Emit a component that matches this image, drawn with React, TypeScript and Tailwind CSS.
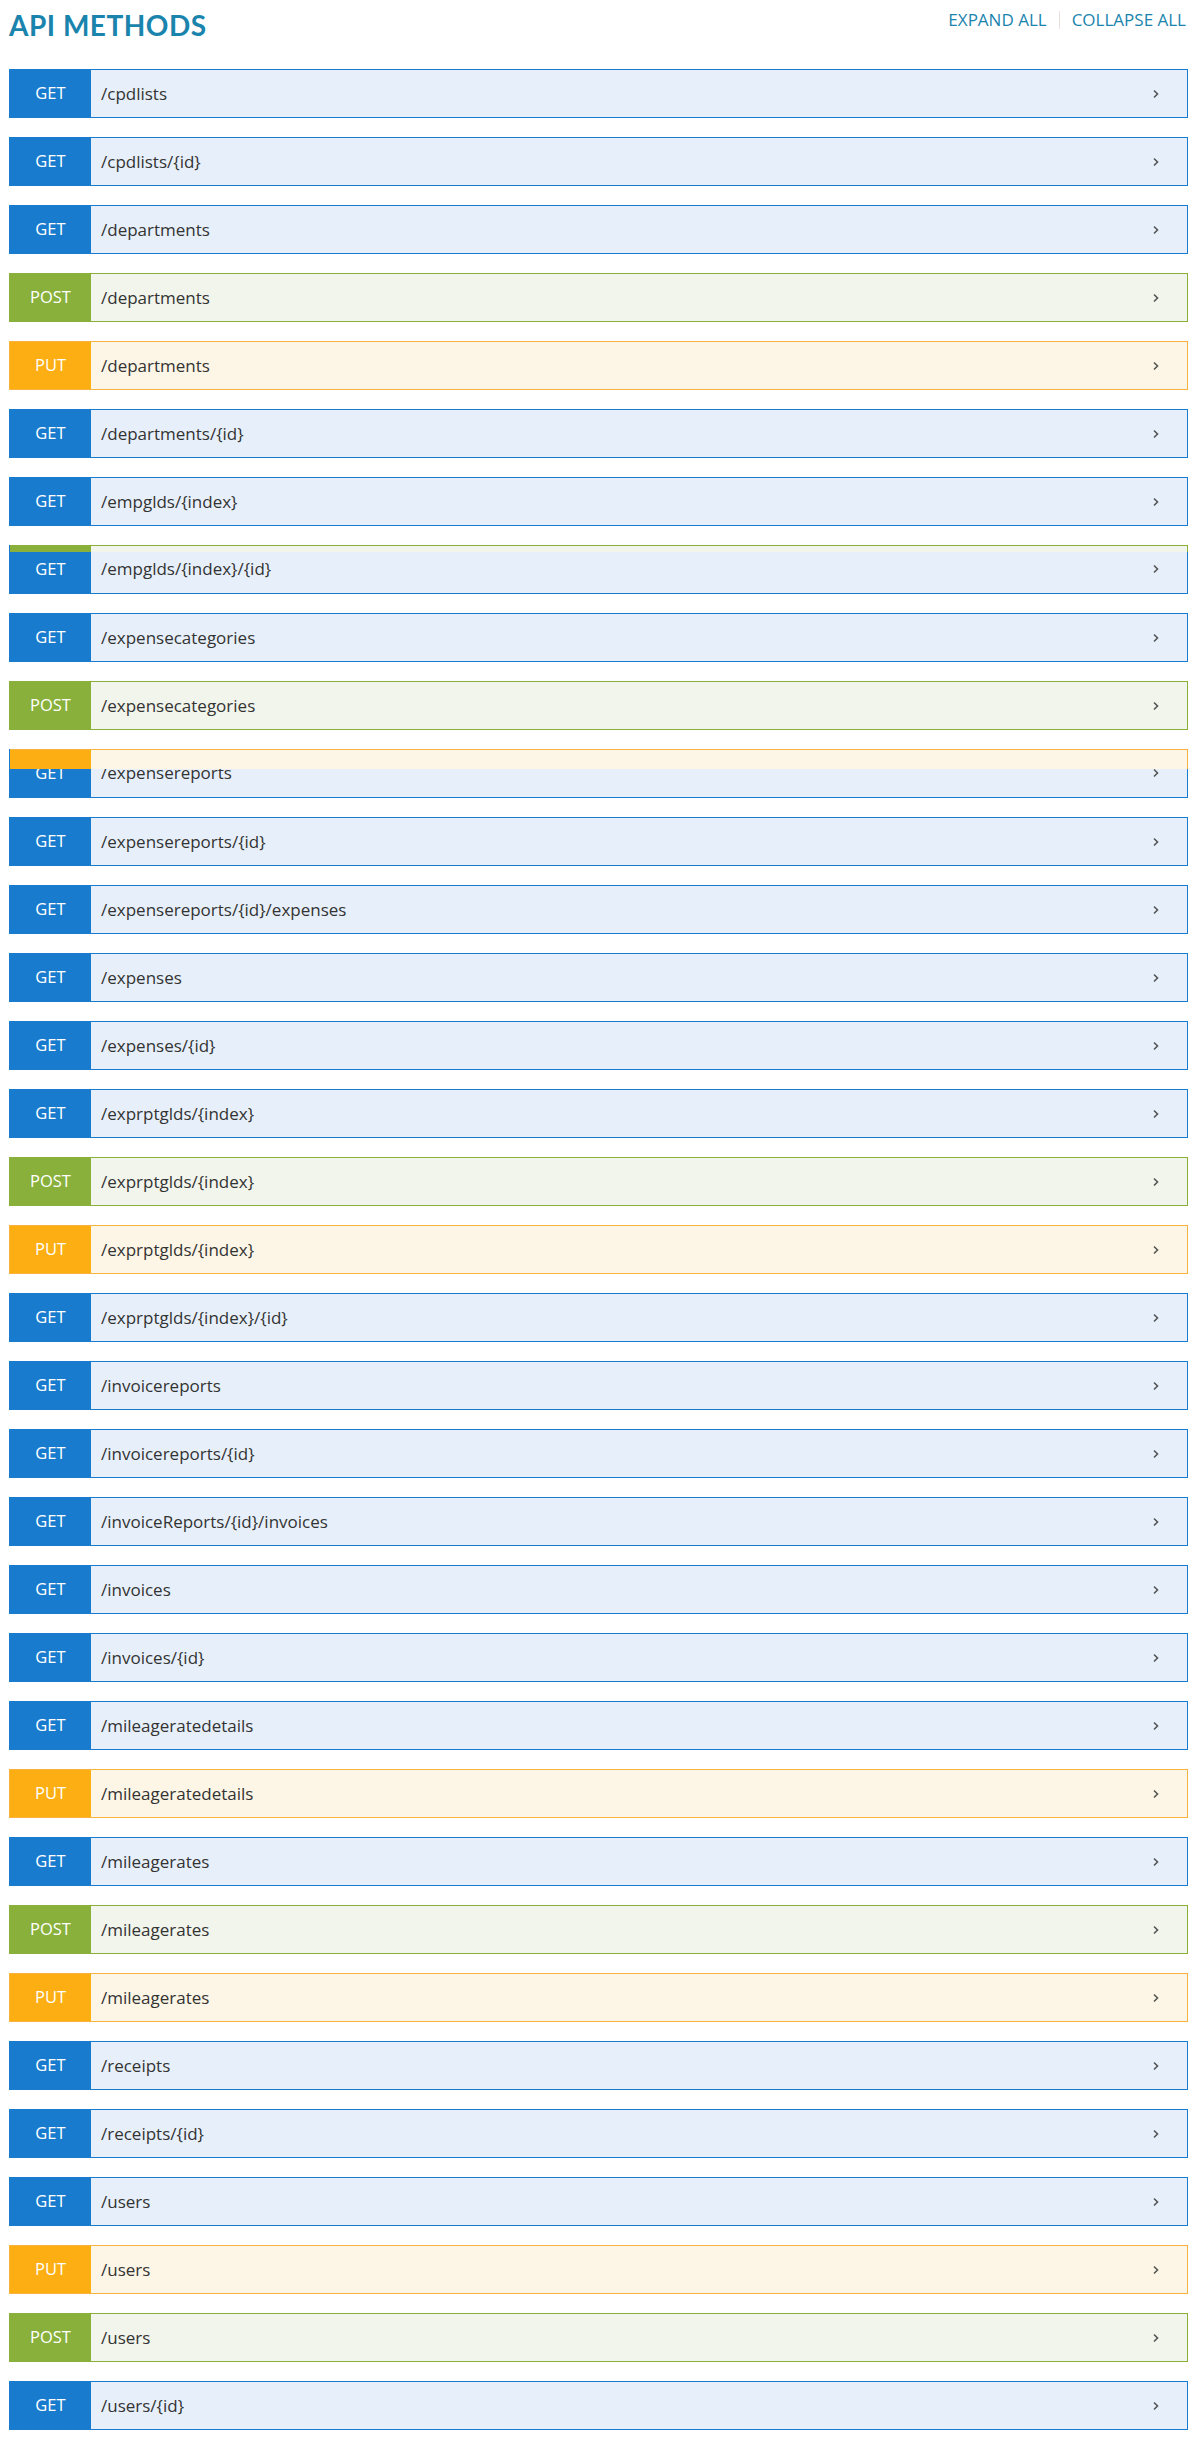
import React from 'react';

type Method = 'GET' | 'POST' | 'PUT';

const rows: [Method, string, Method?][] = [
  ['GET', '/cpdlists'],
  ['GET', '/cpdlists/{id}'],
  ['GET', '/departments'],
  ['POST', '/departments'],
  ['PUT', '/departments'],
  ['GET', '/departments/{id}'],
  ['GET', '/empglds/{index}'],
  ['GET', '/empglds/{index}/{id}', 'POST'],
  ['GET', '/expensecategories'],
  ['POST', '/expensecategories'],
  ['GET', '/expensereports`', 'PUT'],
  ['GET', '/expensereports/{id}'],
  ['GET', '/expensereports/{id}/expenses'],
  ['GET', '/expenses'],
  ['GET', '/expenses/{id}'],
  ['GET', '/exprptglds/{index}'],
  ['POST', '/exprptglds/{index}'],
  ['PUT', '/exprptglds/{index}'],
  ['GET', '/exprptglds/{index}/{id}'],
  ['GET', '/invoicereports'],
  ['GET', '/invoicereports/{id}'],
  ['GET', '/invoiceReports/{id}/invoices'],
  ['GET', '/invoices'],
  ['GET', '/invoices/{id}'],
  ['GET', '/mileageratedetails'],
  ['PUT', '/mileageratedetails'],
  ['GET', '/mileagerates'],
  ['POST', '/mileagerates'],
  ['PUT', '/mileagerates'],
  ['GET', '/receipts'],
  ['GET', '/receipts/{id}'],
  ['GET', '/users'],
  ['PUT', '/users'],
  ['POST', '/users'],
  ['GET', '/users/{id}'],
];

const styles: Record<Method, { badge: string; body: string; border: string }> = {
  GET: { badge: 'bg-[#187bcd]', body: 'bg-[#e7f0fa]', border: 'border-[#187bcd]' },
  POST: { badge: 'bg-[#88b03a]', body: 'bg-[#f1f5ec]', border: 'border-[#88b03a]' },
  PUT: { badge: 'bg-[#fcae13]', body: 'bg-[#fdf6e6]', border: 'border-[#f7b23f]' },
};

const Chevron = () => (
  <svg width="10" height="10" viewBox="0 0 10 10" className="mr-[26px] text-[#555]">
    <path d="M3 1.5 L6.5 5 L3 8.5" fill="none" stroke="currentColor" strokeWidth="1.6" />
  </svg>
);

const Row = ({ method, path, under }: { method: Method; path: string; under?: Method }) => {
  const s = styles[method];
  const u = under ? styles[under] : null;
  const strip = under === 'PUT' ? 'h-[20px]' : 'h-[7px]';
  return (
    <div className="relative h-[49px] overflow-hidden">
      <div className={`flex h-[49px] border-b border-r ${u ? 'border-t-0' : 'border-t'} ${s.border}`}>
        <div className={`w-[81px] shrink-0 flex items-center justify-center text-white text-[16.5px] ${s.badge}`}>
          {method}
        </div>
        <div className={`flex-1 flex items-center justify-between text-[#333] text-[17px] pl-[10px] ${s.body}`}>
          <span>{path}</span>
          <Chevron />
        </div>
      </div>
      {u && (
        <div className={`absolute left-0 right-0 top-0 flex ${strip} border-t border-r ${u.border}`}>
          <div className={`w-[81px] ${u.badge}`} />
          <div className={`flex-1 ${u.body}`} />
        </div>
      )}
    </div>
  );
};

export default function App() {
  return (
    <div className="w-[1193px] bg-white pl-[9px] pr-[5px] pt-[7px] pb-[31px]" style={{ fontFamily: '"Open Sans", "Noto Sans", sans-serif' }}>
      <div className="flex items-start justify-between h-[62px]">
        <h1 className="text-[28px] font-bold text-[#1a84ad] tracking-[0.5px] leading-[36px]" style={{ fontFamily: 'Lato, sans-serif' }}>API METHODS</h1>
        <div className="flex items-center text-[17px] text-[#1a84ad] pr-[2px] leading-[22px] mt-[2px]">
          <span>EXPAND ALL</span>
          <span className="mx-[12px] w-px h-[18px] bg-[#eadfdc]" />
          <span>COLLAPSE ALL</span>
        </div>
      </div>
      <div className="flex flex-col gap-[19px]">
        {rows.map(([m, p, u], i) => (
          <div key={i} className={`border-l ${styles[m].border}`}>
            <Row method={m} path={p} under={u} />
          </div>
        ))}
      </div>
    </div>
  );
}
